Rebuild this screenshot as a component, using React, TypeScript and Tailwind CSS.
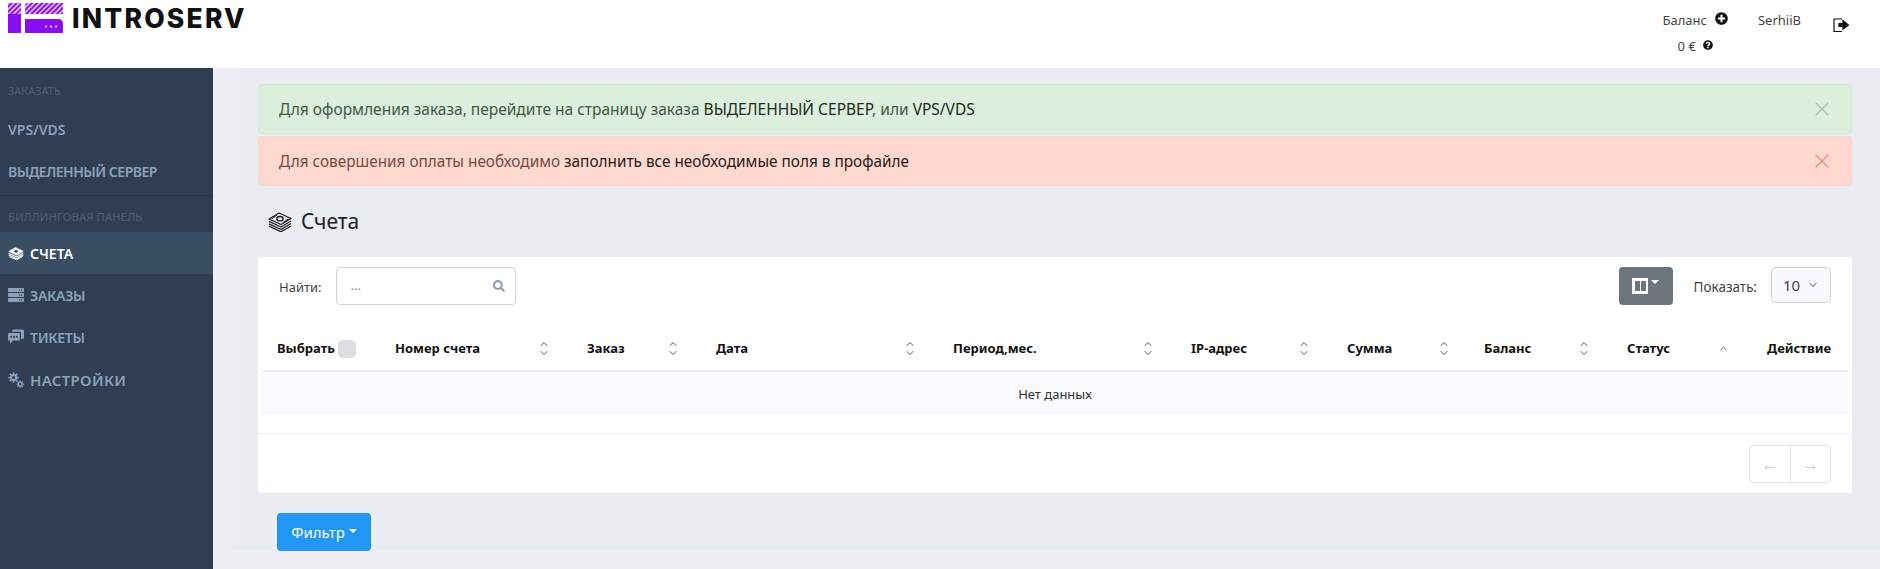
import React from "react";
import { FaServer, FaPlusCircle, FaQuestionCircle, FaSearch } from "react-icons/fa";
import { X, ChevronDown, ChevronUp } from "lucide-react";

const font = "font-['Noto_Sans','Open_Sans',sans-serif]";

function Money({ className }: { className?: string }) {
  return (
    <svg viewBox="0 0 24 20" className={className} fill="none" stroke="currentColor" strokeWidth="1.3" strokeLinejoin="round">
      <path d="M11 1 L23 6.5 L13 12.5 L1 7 Z" fill="#e9ecf1" />
      <ellipse cx="12" cy="6.7" rx="3.2" ry="2.2" />
      <path d="M9 3 L3.5 6.8 M20.5 6.8 L15 10.5" strokeWidth="1" />
      <path d="M1 9.3 L13 15 L23 9" />
      <path d="M1 11.8 L13 17.5 L23 11.5" />
      <path d="M1 14.2 L13 19.8 L23 14" />
    </svg>
  );
}

function MoneySolid({ className }: { className?: string }) {
  return (
    <svg viewBox="0 0 24 20" className={className} fill="currentColor" stroke="currentColor" strokeWidth="0.8" strokeLinejoin="round">
      <path d="M11 1 L23 6.5 L13 12.5 L1 7 Z" />
      <ellipse cx="12" cy="6.7" rx="3" ry="2" fill="#3a4e63" stroke="none" />
      <path d="M1 9.5 L13 15.2 L23 9.2" fill="none" strokeWidth="1.7" />
      <path d="M1 12.2 L13 17.8 L23 11.8" fill="none" strokeWidth="1.7" />
      <path d="M2 14.8 L13 19.6 L22 14.4" fill="none" strokeWidth="1.4" />
    </svg>
  );
}

function Tickets({ className }: { className?: string }) {
  return (
    <svg viewBox="0 0 16 16" className={className} fill="currentColor">
      <path d="M5.5 0.5 H14.5 Q16 0.5 16 2 V8.5 Q16 10 14.5 10 H13 V4 Q13 2.8 11.8 2.8 H4 V2 Q4 0.5 5.5 0.5 Z" />
      <path d="M1.2 4 H10.6 Q11.8 4 11.8 5.2 V10.4 Q11.8 11.6 10.6 11.6 H5 L2 14.8 V11.6 H1.2 Q0 11.6 0 10.4 V5.2 Q0 4 1.2 4 Z" />
      <circle cx="3.2" cy="7.8" r="1" fill="#2f3e50" />
      <circle cx="6" cy="7.8" r="1" fill="#2f3e50" />
      <circle cx="8.8" cy="7.8" r="1" fill="#2f3e50" />
    </svg>
  );
}

function Gear({ cx, cy, r, w }: { cx: number; cy: number; r: number; w: number }) {
  const teeth = Array.from({ length: 8 }, (_, i) => i * 45);
  return (
    <g>
      {teeth.map((a) => (
        <rect key={a} x={cx - w / 2} y={cy - r - w * 0.9} width={w} height={w * 1.2} transform={`rotate(${a} ${cx} ${cy})`} />
      ))}
      <circle cx={cx} cy={cy} r={r * 0.72} fill="none" stroke="currentColor" strokeWidth={r * 0.55} />
    </g>
  );
}

function Cogs({ className }: { className?: string }) {
  return (
    <svg viewBox="0 0 16 16" className={className} fill="currentColor">
      <Gear cx={5.6} cy={5.6} r={3.6} w={1.7} />
      <Gear cx={12.2} cy={12.2} r={2.6} w={1.3} />
    </svg>
  );
}

function Logo() {
  return (
    <svg viewBox="0 0 55 30" className="h-[30px] w-[55px]">
      <defs>
        <pattern id="hatch" width="3.6" height="3.6" patternUnits="userSpaceOnUse" patternTransform="rotate(45)">
          <rect width="3.6" height="3.6" fill="#8a0cf0" />
          <rect width="1.6" height="3.6" fill="#e6c8fb" />
        </pattern>
      </defs>
      <rect x="0" y="0" width="13" height="11" fill="url(#hatch)" />
      <rect x="0" y="11" width="13" height="19" fill="#8a0cf0" />
      <path d="M20 0 H55 V11 H17 V3 Q17 0 20 0 Z" fill="url(#hatch)" />
      <path d="M17 16 H50 Q55 16 55 21 V30 H17 Z" fill="#8a0cf0" />
      <circle cx="38" cy="23.5" r="1" fill="#fff" />
      <circle cx="43" cy="23.5" r="1" fill="#fff" />
      <circle cx="48" cy="23.5" r="1" fill="#fff" />
    </svg>
  );
}

function Sort() {
  return (
    <span className="flex flex-col items-center text-[#3c4146]">
      <ChevronUp size={12} strokeWidth={1.8} className="-mb-[3px]" />
      <ChevronDown size={12} strokeWidth={1.8} />
    </span>
  );
}

const cols: [string, string, string][] = [
  ["Номер счета", "w-[192px]", "pr-[22px]"],
  ["Заказ", "w-[129px]", "pr-[22px]"],
  ["Дата", "w-[237px]", "pr-[22px]"],
  ["Период,мес.", "w-[238px]", "pr-[22px]"],
  ["IP-адрес", "w-[156px]", "pr-[22px]"],
  ["Сумма", "w-[137px]", "pr-[19px]"],
  ["Баланс", "w-[143px]", "pr-[22px]"],
];

function NavItem({ icon, label, active, extra }: { icon?: React.ReactNode; label: string; active?: boolean; extra?: string }) {
  return (
    <div className={`flex h-[42px] items-center gap-[6px] pl-2 text-[14px] font-semibold ${active ? "bg-[#3a4e63] text-white" : "text-[#8ba1b9]"}`}>
      {icon}
      <span className={extra}>{label}</span>
    </div>
  );
}

export default function App() {
  return (
    <div className={`flex h-[569px] w-[1880px] flex-col overflow-hidden bg-[#eeeef4] ${font} text-[13px] text-[#333]`}>
      <header className="flex h-[68px] shrink-0 bg-white">
        <div className="flex items-start gap-[9px] pl-2 pt-[3px]">
          <Logo />
          <span className="font-['Inter',sans-serif] text-[26.5px] leading-[30px] font-extrabold tracking-[2.2px] text-[#111]">INTROSERV</span>
        </div>
        <div className="ml-auto flex items-start pt-[10px] text-[13px] text-[#444]">
          <div className="flex flex-col items-center">
            <div className="flex items-center gap-[8px] leading-[20px]">
              <span>Баланс</span>
              <FaPlusCircle className="mb-[3px] text-[13px] text-[#111]" />
            </div>
            <div className="mt-[6px] flex items-center gap-[7px] leading-[20px]">
              <span>0 €</span>
              <FaQuestionCircle className="mb-[2px] text-[10px] text-[#111]" />
            </div>
          </div>
          <span className="ml-[30px] leading-[20px]">SerhiiB</span>
          <svg viewBox="0 0 16 16" className="mt-[7px] ml-[32px] mr-[31px] h-[16px] w-[16px]" fill="none" stroke="#111" strokeWidth="1.2">
            <path d="M9 2 H1 V14.5 H9" />
            <path d="M6 6.5 H10 V3.5 L15.5 8 L10 12 V9.5 H6 Z" fill="#111" />
          </svg>
        </div>
      </header>
      <div className="flex min-h-0 flex-1">
        <aside className="w-[213px] shrink-0 bg-[#2f3e50]">
          <div className="pl-2 pt-[16px] pb-[10px] text-[11px] leading-[14px] text-[#4d5f72]">ЗАКАЗАТЬ</div>
          <NavItem label="VPS/VDS" />
          <NavItem label="ВЫДЕЛЕННЫЙ СЕРВЕР" extra="tracking-[-0.5px]" />
          <div className="mt-[3px] border-t border-[#28364a]" />
          <div className="pl-2 pt-[14px] pb-[8px] text-[11.5px] leading-[14px] text-[#4d5f72]">БИЛЛИНГОВАЯ ПАНЕЛЬ</div>
          <NavItem active icon={<MoneySolid className="h-[15px] w-[16px]" />} label="СЧЕТА" />
          <NavItem icon={<FaServer className="h-[16px] w-[16px]" />} label="ЗАКАЗЫ" extra="tracking-[-0.3px]" />
          <NavItem icon={<Tickets className="h-[16px] w-[16px]" />} label="ТИКЕТЫ" extra="tracking-[-0.3px]" />
          <div className="pt-[1px]">
            <NavItem icon={<Cogs className="h-[16px] w-[16px]" />} label="НАСТРОЙКИ" extra="text-[15px] tracking-[0.3px]" />
          </div>
        </aside>
        <main className="flex min-w-0 flex-1 flex-col">
          <div className="h-[482px] shrink-0 bg-[linear-gradient(to_right,#eeeef4,#e9ecf1_28px)] pt-[16px] pr-[28px] pl-[45px]">
            <div className="flex h-[50px] items-center justify-between rounded border border-[#d4e8d6] bg-[#dcefdc] pr-[17px] pl-[20px] text-[15.5px] text-[#3f5a3f]">
              <span className="pt-[2px]">Для оформления заказа, перейдите на страницу заказа <span className="text-[#1d2a1d]">ВЫДЕЛЕННЫЙ СЕРВЕР</span>, или <span className="text-[#1d2a1d]">VPS/VDS</span></span>
              <X size={24} strokeWidth={1.2} className="text-[#a3c5a3]" />
            </div>
            <div className="mt-[2px] flex h-[50px] items-center justify-between rounded border border-[#fbd5c9] bg-[#ffd9d0] pr-[17px] pl-[20px] text-[15.35px] text-[#7a4a3c]">
              <span className="pt-[2px]">Для совершения оплаты необходимо <span className="text-[#2b1a15]">заполнить все необходимые поля в профайле</span></span>
              <X size={24} strokeWidth={1.2} className="text-[#ea8f7c]" />
            </div>
            <div className="flex h-[71px] items-center gap-[9px] pl-[10px]">
              <Money className="h-[20px] w-[24px] text-[#222]" />
              <h1 className="text-[21px] font-normal text-[#222]">Счета</h1>
            </div>
            <section className="rounded-[3px] bg-white">
              <div className="flex h-[81px] items-start pr-[21px] pl-[20px] pt-[10px]">
                <span className="ml-px pt-[10px] text-[13px] leading-[20px] text-[#444]">Найти:</span>
                <div className="ml-[14px] flex h-[38px] w-[180px] items-center justify-between rounded border border-[#ced4da] pr-[10px] pl-[14px] text-[#888]">
                  <span>...</span>
                  <FaSearch className="text-[12px] text-[#8a9bad]" />
                </div>
                <button className="ml-auto flex h-[38px] w-[54px] items-center justify-center gap-[3px] rounded bg-[#6c757d]">
                  <span className="flex h-[16px] w-[16px] items-center justify-center gap-[1px] bg-white">
                    <span className="h-[10px] w-[5px] bg-[#6c757d]" />
                    <span className="h-[10px] w-[5px] bg-[#6c757d]" />
                  </span>
                  <span className="mb-[8px] h-0 w-0 border-x-[4px] border-t-[4px] border-x-transparent border-t-white" />
                </button>
                <span className="ml-[21px] pt-[10px] text-[13.5px] leading-[20px] text-[#444]">Показать:</span>
                <div className="ml-[14px] flex h-[36px] w-[60px] items-center justify-between rounded-[5px] border border-[#ced4da] bg-[#f8f9fb] pr-[11px] pl-[11px] text-[15px] text-[#444]">
                  <span>10</span>
                  <ChevronDown size={12} strokeWidth={2} />
                </div>
              </div>
              <div className="px-[4px]">
                <table className="w-full table-fixed border-collapse">
                  <thead>
                    <tr className="h-[31px] border-b-2 border-[#eceef1] text-left text-[13px] font-bold text-[#111]">
                      <th className="w-[118px] pb-[11px] pl-[15px]">
                        <div className="flex items-center gap-[3px]">
                          <span>Выбрать</span>
                          <span className="h-[18px] w-[18px] rounded-[5px] bg-[#dcdee1]" />
                        </div>
                      </th>
                      {cols.map(([label, w, pr]) => (
                        <th key={label} className={`${w} ${pr} pb-[11px] pl-[15px]`}>
                          <div className="flex items-center justify-between">
                            <span>{label}</span>
                            <Sort />
                          </div>
                        </th>
                      ))}
                      <th className="w-[140px] pr-[23px] pb-[11px] pl-[15px]">
                        <div className="flex items-center justify-between">
                          <span>Статус</span>
                          <ChevronUp size={11} strokeWidth={2} className="text-[#555]" />
                        </div>
                      </th>
                      <th className="pr-[17px] pb-[11px] pl-[10px] text-right">Действие</th>
                    </tr>
                  </thead>
                  <tbody>
                    <tr className="h-[44px] bg-[#f9fafc]">
                      <td colSpan={10} className="pt-[2px] text-center text-[13px] text-[#333]">Нет данных</td>
                    </tr>
                  </tbody>
                </table>
              </div>
              <div className="mt-[18px] flex h-[60px] items-start justify-end border-t border-[#eceef1] pt-[11px] pr-[21px]">
                <div className="flex h-[38px] w-[82px] rounded border border-[#e3e5e8] text-[#c4c7cb]">
                  <span className="flex flex-1 items-center justify-center border-r border-[#e3e5e8] text-[17px]">←</span>
                  <span className="flex flex-1 items-center justify-center text-[17px]">→</span>
                </div>
              </div>
            </section>
            <button className="mt-[20px] ml-[19px] flex h-[38px] w-[94px] items-center justify-center gap-[4px] rounded bg-[#2196f3] text-[15px] text-white">
              <span>Фильтр</span>
              <span className="mb-[3px] h-0 w-0 border-x-[4px] border-t-[4px] border-x-transparent border-t-white" />
            </button>
          </div>
        </main>
      </div>
    </div>
  );
}
